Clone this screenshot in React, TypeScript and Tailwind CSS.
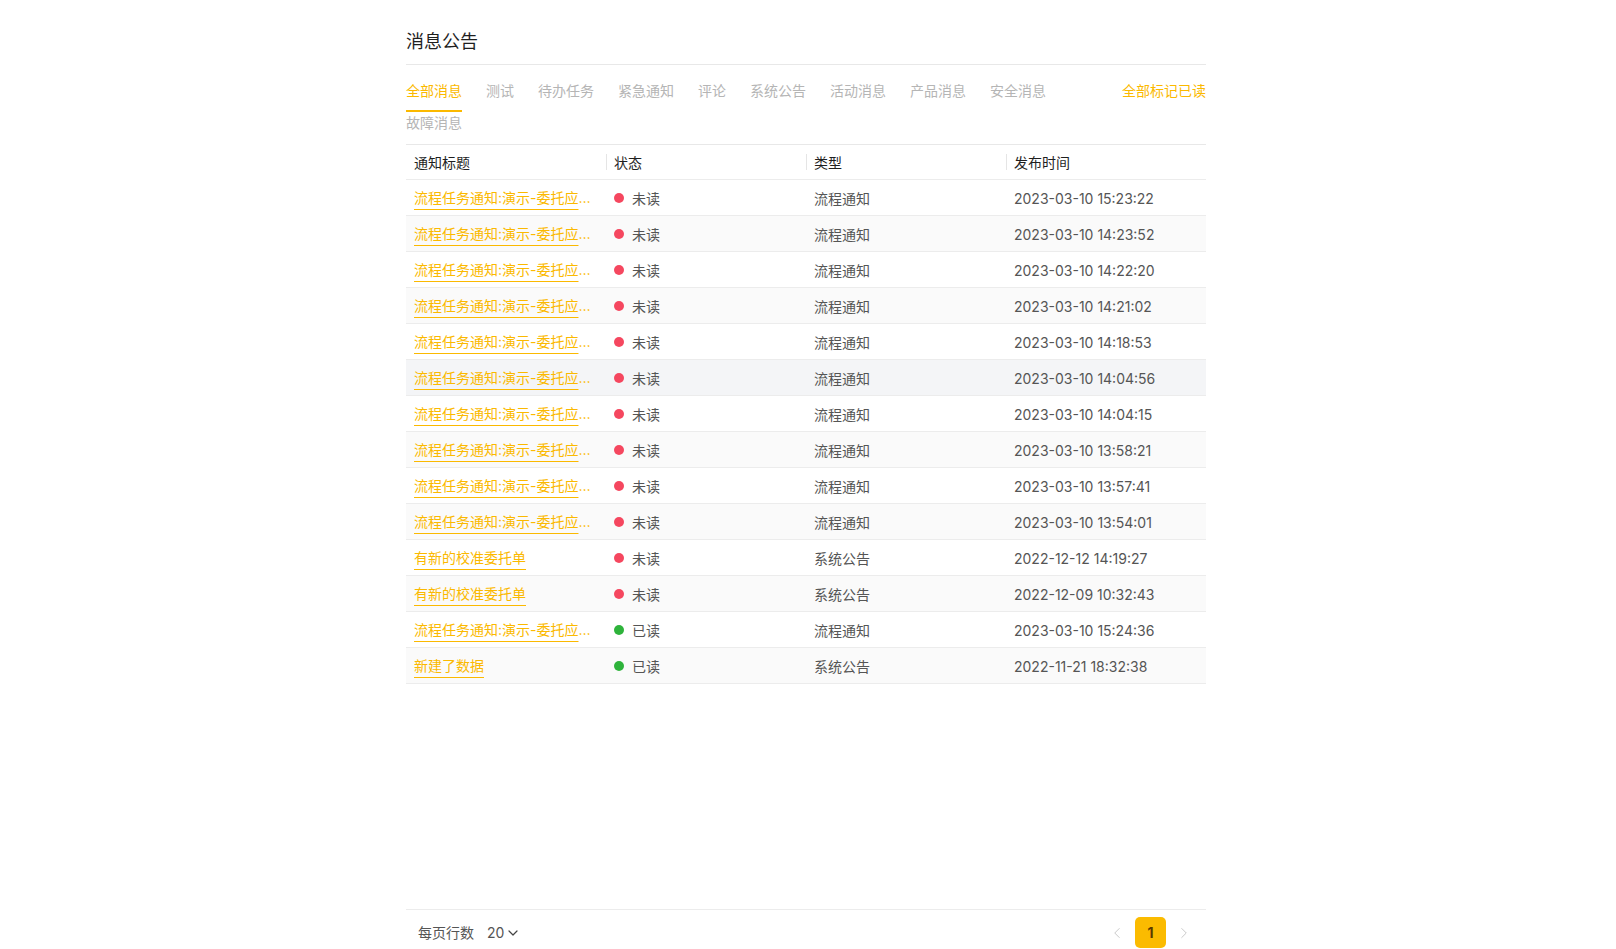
import { ChevronDown, ChevronLeft, ChevronRight } from 'lucide-react';

const tabs = ['全部消息', '测试', '待办任务', '紧急通知', '评论', '系统公告', '活动消息', '产品消息', '安全消息', '故障消息'];

const longTitle = '流程任务通知:演示-委托应用审批流程已提交';

const rows = [
  { title: longTitle, read: false, type: '流程通知', time: '2023-03-10 15:23:22' },
  { title: longTitle, read: false, type: '流程通知', time: '2023-03-10 14:23:52' },
  { title: longTitle, read: false, type: '流程通知', time: '2023-03-10 14:22:20' },
  { title: longTitle, read: false, type: '流程通知', time: '2023-03-10 14:21:02' },
  { title: longTitle, read: false, type: '流程通知', time: '2023-03-10 14:18:53' },
  { title: longTitle, read: false, type: '流程通知', time: '2023-03-10 14:04:56' },
  { title: longTitle, read: false, type: '流程通知', time: '2023-03-10 14:04:15' },
  { title: longTitle, read: false, type: '流程通知', time: '2023-03-10 13:58:21' },
  { title: longTitle, read: false, type: '流程通知', time: '2023-03-10 13:57:41' },
  { title: longTitle, read: false, type: '流程通知', time: '2023-03-10 13:54:01' },
  { title: '有新的校准委托单', read: false, type: '系统公告', time: '2022-12-12 14:19:27' },
  { title: '有新的校准委托单', read: false, type: '系统公告', time: '2022-12-09 10:32:43' },
  { title: longTitle, read: true, type: '流程通知', time: '2023-03-10 15:24:36' },
  { title: '新建了数据', read: true, type: '系统公告', time: '2022-11-21 18:32:38' },
];

const headers = ['通知标题', '状态', '类型', '发布时间'];

export default function App() {
  return (
    <div
      className="h-screen flex justify-center bg-white pr-[4px]"
      style={{ fontFamily: 'Inter, "Noto Sans CJK SC", sans-serif' }}
    >
      <div className="w-[800px] flex flex-col">
        <div className="h-[65px] flex items-end pb-[10px] border-b border-[#e8e8e8]">
          <h1 className="text-[18px] leading-[24px] text-[#1f1f1f]">消息公告</h1>
        </div>

        <div className="flex items-start pt-[15px] border-b border-[#e8e8e8]">
          <div className="flex-1 flex flex-wrap gap-x-[24px] pr-[60px]">
            {tabs.map((t, i) => (
              <div
                key={t}
                className={
                  'text-[14px] leading-[22px] pb-[8px] border-b-2 ' +
                  (i === 0 ? 'text-[#fbb900] border-[#fbb900]' : 'text-[#b5b5b5] border-transparent')
                }
              >
                {t}
              </div>
            ))}
          </div>
          <button className="text-[14px] leading-[22px] text-[#fbb900]">全部标记已读</button>
        </div>

        <div className="grid grid-cols-4 h-[35px] border-b border-[#ececec] items-center">
          {headers.map((h, i) => (
            <div key={h} className="relative px-[8px] text-[14px] text-[#1f1f1f]">
              {i > 0 && <span className="absolute left-0 top-1/2 -translate-y-1/2 h-[16px] w-px bg-[#e5e5e5]" />}
              {h}
            </div>
          ))}
        </div>

        {rows.map((r, i) => (
          <div
            key={i}
            className={
              'grid grid-cols-4 h-[36px] pt-[1px] border-b border-[#ececec] items-center text-[14px] ' +
              (i === 5 ? 'bg-[#f4f5f7]' : i % 2 === 1 ? 'bg-[#fafafa]' : 'bg-white')
            }
          >
            <div className="px-[8px] py-[6px] truncate text-[#fbb900] leading-[22px]">
              <span className="underline decoration-[#fbb900] underline-offset-[6px]">{r.title}</span>
            </div>
            <div className="px-[8px] flex items-center gap-[8px] text-[#555]">
              <span className={'w-[10px] h-[10px] rounded-full ' + (r.read ? 'bg-[#2eb33b]' : 'bg-[#f5475f]')} />
              {r.read ? '已读' : '未读'}
            </div>
            <div className="px-[8px] text-[#555]">{r.type}</div>
            <div className="px-[8px] text-[#555]">{r.time}</div>
          </div>
        ))}

        <div className="mt-auto border-t border-[#ececec] flex items-center justify-between pt-[7px] pb-[1px]">
          <div className="flex items-center pl-[12px] text-[14px] text-[#555]">
            <span>每页行数</span>
            <span className="ml-[13px]">20</span>
            <ChevronDown size={16} strokeWidth={1.8} className="ml-[1px] text-[#444]" />
          </div>
          <div className="flex items-center gap-[9px] pr-[13px]">
            <ChevronLeft size={18} strokeWidth={1.3} className="text-[#c8c8c8]" />
            <div className="w-[31px] h-[31px] rounded-[5px] bg-[#fbbb00] flex items-center justify-center text-[14px] font-bold text-[#5a3a00]">
              1
            </div>
            <ChevronRight size={18} strokeWidth={1.3} className="text-[#c8c8c8]" />
          </div>
        </div>
      </div>
    </div>
  );
}
